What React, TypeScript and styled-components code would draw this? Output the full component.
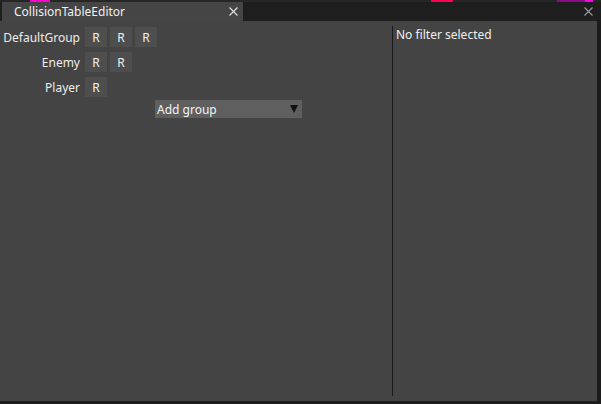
import React from "react";
import styled, { createGlobalStyle } from "styled-components";

const Global = createGlobalStyle`
  html, body { margin: 0; padding: 0; background: #1b1b1b; }
  body { font-family: "Noto Sans", "DejaVu Sans", sans-serif; }
`;

const Root = styled.div`
  width: 601px;
  height: 404px;
  display: flex;
  flex-direction: column;
  background: #1c1c1c;
  overflow: hidden;
  color: #e6e6e6;
  font-size: 12px;
`;

const TopStrip = styled.div`
  height: 2px;
  display: flex;
  background: #262626;
`;

const Seg = styled.div<{ $w: number; $c?: string }>`
  width: ${(p) => p.$w}px;
  height: 2px;
  background: ${(p) => p.$c ?? "transparent"};
`;

const TabBar = styled.div`
  height: 19px;
  display: flex;
  align-items: stretch;
  background: #1e1e1e;
`;

const Tab = styled.div`
  margin-left: 2px;
  width: 241px;
  background: #454545;
  display: flex;
  align-items: center;
  justify-content: space-between;
  padding: 0 5px 0 12px;
  box-sizing: border-box;
  font-size: 12px;
  color: #f0f0f0;
`;

const CloseX = styled.svg<{ $c?: string }>`
  width: 9px;
  height: 9px;
  stroke: ${(p) => p.$c ?? "#d8d8d8"};
  stroke-width: 1.1;
  flex: none;
`;

const Spacer = styled.div`
  flex: 1;
`;

const WinClose = styled.div`
  display: flex;
  align-items: center;
  padding-right: 8px;
`;

const Body = styled.div`
  flex: 1;
  display: flex;
  background: #444444;
  margin: 0 4px 3px 0;
`;

const LeftPanel = styled.div`
  width: 392px;
  padding-top: 6px;
  display: flex;
  flex-direction: column;
  gap: 5px;
`;

const Row = styled.div`
  display: flex;
  align-items: center;
  height: 20px;
`;

const Label = styled.div`
  width: 80px;
  text-align: right;
  margin-right: 5px;
  padding-top: 1px;
  font-size: 12px;
  color: #ececec;
  line-height: 20px;
`;

const Buttons = styled.div`
  display: flex;
  gap: 3px;
`;

const RButton = styled.div`
  width: 22px;
  height: 20px;
  background: #4e4e4e;
  display: flex;
  align-items: center;
  justify-content: center;
  font-size: 12px;
  color: #f0f0f0;
`;

const Combo = styled.div`
  margin-left: 155px;
  margin-top: -2px;
  width: 147px;
  height: 18px;
  background: #5f5f5f;
  display: flex;
  align-items: center;
  justify-content: space-between;
  padding: 0 4px 0 2px;
  box-sizing: border-box;
  font-size: 12px;
  color: #f4f4f4;
`;

const Arrow = styled.div`
  width: 0;
  height: 0;
  border-left: 4.5px solid transparent;
  border-right: 4.5px solid transparent;
  border-top: 8px solid #111;
`;

const Divider = styled.div`
  width: 1px;
  background: #1a1a1a;
  margin: 5px 0 5px 0;
`;

const RightPanel = styled.div`
  flex: 1;
  padding: 6px 0 0 3px;
  font-size: 12px;
  color: #f0f0f0;
  line-height: 16px;
`;

const X = ({ c }: { c?: string }) => (
  <CloseX $c={c} viewBox="0 0 9 9">
    <path d="M0.5 0.5 L8.5 8.5 M8.5 0.5 L0.5 8.5" fill="none" />
  </CloseX>
);

const groups: { name: string; count: number }[] = [
  { name: "DefaultGroup", count: 3 },
  { name: "Enemy", count: 2 },
  { name: "Player", count: 1 },
];

export default function App() {
  return (
    <Root>
      <Global />
      <TopStrip>
        <Seg $w={30} />
        <Seg $w={20} $c="#ff00d0" />
        <Seg $w={381} />
        <Seg $w={22} $c="#ff0050" />
        <Seg $w={104} />
        <Seg $w={28} $c="#8a0a8a" />
        <Seg $w={8} $c="#ff00e0" />
      </TopStrip>
      <TabBar>
        <Tab>
          <span>CollisionTableEditor</span>
          <X c="#e0e0e0" />
        </Tab>
        <Spacer />
        <WinClose>
          <X c="#9a9a9a" />
        </WinClose>
      </TabBar>
      <Body>
        <LeftPanel>
          {groups.map((g) => (
            <Row key={g.name}>
              <Label>{g.name}</Label>
              <Buttons>
                {Array.from({ length: g.count }).map((_, i) => (
                  <RButton key={i}>R</RButton>
                ))}
              </Buttons>
            </Row>
          ))}
          <Combo>
            <span>Add group</span>
            <Arrow />
          </Combo>
        </LeftPanel>
        <Divider />
        <RightPanel>No filter selected</RightPanel>
      </Body>
    </Root>
  );
}
